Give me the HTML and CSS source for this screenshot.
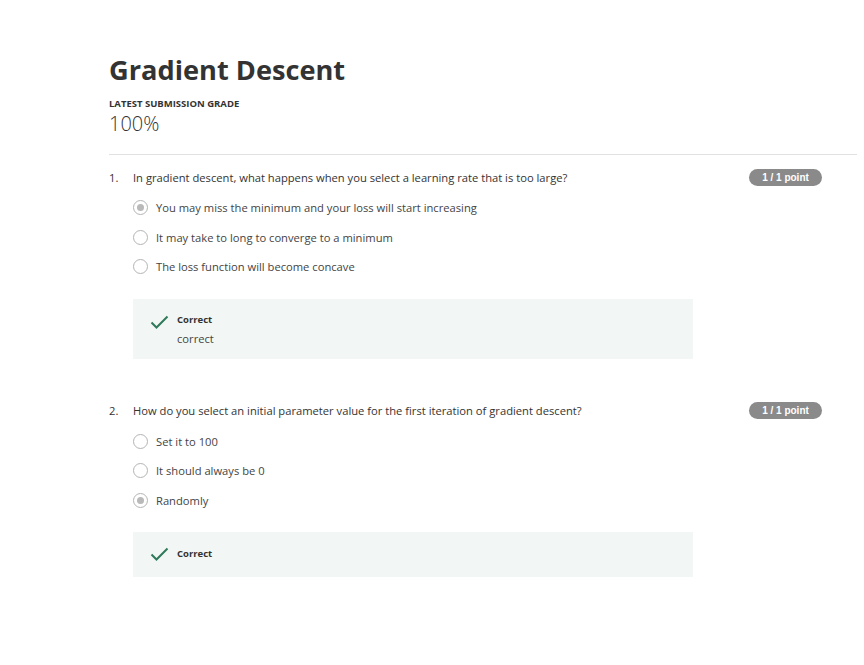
FILE: index.html
```html
<!DOCTYPE html>
<html>
<head>
<meta charset="utf-8">
<link rel="stylesheet" href="styles.css">
</head>
<body>
<main class="page">
  <header class="head">
    <h1 class="title">Gradient Descent</h1>
    <div class="grade-label">LATEST SUBMISSION GRADE</div>
    <div class="grade">100%</div>
  </header>
  <section class="question">
    <div class="q-row">
      <span class="q-num">1.</span>
      <span class="q-text">In gradient descent, what happens when you select a learning rate that is too large?</span>
      <span class="badge">1 / 1 point</span>
    </div>
    <ul class="options">
      <li class="option"><span class="radio checked"></span>You may miss the minimum and your loss will start increasing</li>
      <li class="option"><span class="radio"></span>It may take to long to converge to a minimum</li>
      <li class="option"><span class="radio"></span>The loss function will become concave</li>
    </ul>
    <div class="feedback">
      <svg class="check" width="19" height="14" viewBox="0 0 19 14"><path d="M1.5 7.5 L6.5 12.5 L17.5 1.5" fill="none" stroke="#2f7a5b" stroke-width="2"/></svg>
      <div class="fb-body">
        <div class="fb-title">Correct</div>
        <div class="fb-text">correct</div>
      </div>
    </div>
  </section>
  <section class="question q2">
    <div class="q-row">
      <span class="q-num">2.</span>
      <span class="q-text">How do you select an initial parameter value for the first iteration of gradient descent?</span>
      <span class="badge">1 / 1 point</span>
    </div>
    <ul class="options">
      <li class="option"><span class="radio"></span>Set it to 100</li>
      <li class="option"><span class="radio"></span>It should always be 0</li>
      <li class="option"><span class="radio checked"></span>Randomly</li>
    </ul>
    <div class="feedback short">
      <svg class="check" width="19" height="14" viewBox="0 0 19 14"><path d="M1.5 7.5 L6.5 12.5 L17.5 1.5" fill="none" stroke="#2f7a5b" stroke-width="2"/></svg>
      <div class="fb-body">
        <div class="fb-title">Correct</div>
      </div>
    </div>
  </section>
</main>
</body>
</html>
```

FILE: styles.css
```css
* { box-sizing: border-box; }
html, body { margin: 0; padding: 0; background: #fff; }
body {
  font-family: "Open Sans", "DejaVu Sans", sans-serif;
  color: #333;
}
.page {
  width: 748px;
  margin-left: 109px;
  padding-top: 52px;
}
.head {
  border-bottom: 1px solid #e1e1e1;
  padding-bottom: 17px;
}
.title {
  margin: 0;
  font-size: 27.2px;
  font-weight: 700;
  line-height: 36px;
  color: #333;
}
.grade-label {
  margin-top: 9px;
  font-size: 9.5px;
  font-weight: 700;
  line-height: 14px;
  color: #333;
}
.grade {
  font-size: 20px;
  line-height: 26px;
  font-weight: 300;
  color: #333;
}
.question {
  padding-top: 13px;
  padding-right: 35px;
}
.q2 { padding-top: 43px; }
.q-row {
  display: flex;
  align-items: center;
  height: 18px;
  font-size: 11.2px;
  color: #333;
}
.q-num { width: 24px; }
.q-text { flex: 1; }
.badge {
  background: #8a8a8a;
  color: #fff;
  font-family: "Liberation Sans", Arial, sans-serif;
  font-weight: 700;
  font-size: 10px;
  line-height: 17px;
  height: 17px;
  width: 73px;
  text-align: center;
  border-radius: 9px;
}
.options {
  list-style: none;
  margin: 0;
  padding: 0 0 0 24px;
  margin-top: 7px;
}
.option {
  display: flex;
  align-items: center;
  height: 29.5px;
  font-size: 11.2px;
  color: #444;
}
.radio {
  width: 15px;
  height: 15px;
  border: 1px solid #b4b4b4;
  border-radius: 50%;
  margin-right: 8px;
  display: flex;
  align-items: center;
  justify-content: center;
  background: #fff;
}
.radio.checked::after {
  content: "";
  width: 7px;
  height: 7px;
  border-radius: 50%;
  background: #b9b9b9;
}
.feedback {
  margin: 17px 0 0 24px;
  width: 560px;
  background: #f2f7f5;
  display: flex;
  align-items: flex-start;
  padding: 14px 17px 12px 17px;
}
.feedback.short {
  align-items: center;
  padding: 15px 17px 16px 17px;
}
.check { margin-top: 2px; margin-right: 8px; flex: none; }
.feedback.short .check { margin-top: 0; }
.fb-title {
  font-size: 9.5px;
  font-weight: 700;
  line-height: 14px;
  color: #333;
}
.fb-text {
  margin-top: 4px;
  font-size: 11.2px;
  line-height: 16px;
  color: #444;
}
```
